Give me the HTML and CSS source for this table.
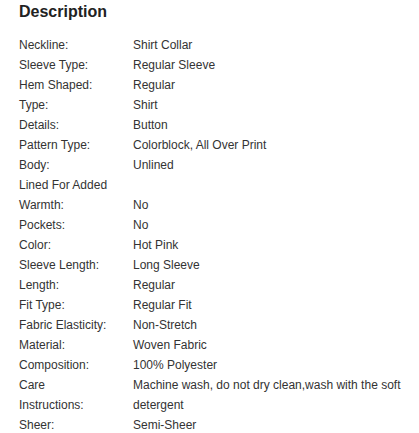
FILE: index.html
```html
<!DOCTYPE html>
<html>
<head>
<meta charset="utf-8">
<link rel="stylesheet" href="styles.css">
</head>
<body>
<div class="desc">
  <h2 class="title">Description</h2>
  <div class="specs">
    <div class="k">Neckline:</div><div class="v">Shirt Collar</div>
    <div class="k">Sleeve Type:</div><div class="v">Regular Sleeve</div>
    <div class="k">Hem Shaped:</div><div class="v">Regular</div>
    <div class="k">Type:</div><div class="v">Shirt</div>
    <div class="k">Details:</div><div class="v">Button</div>
    <div class="k">Pattern Type:</div><div class="v">Colorblock, All Over Print</div>
    <div class="k">Body:</div><div class="v">Unlined</div>
    <div class="k">Lined For Added Warmth:</div><div class="v">No</div>
    <div class="k">Pockets:</div><div class="v">No</div>
    <div class="k">Color:</div><div class="v">Hot Pink</div>
    <div class="k">Sleeve Length:</div><div class="v">Long Sleeve</div>
    <div class="k">Length:</div><div class="v">Regular</div>
    <div class="k">Fit Type:</div><div class="v">Regular Fit</div>
    <div class="k">Fabric Elasticity:</div><div class="v">Non-Stretch</div>
    <div class="k">Material:</div><div class="v">Woven Fabric</div>
    <div class="k">Composition:</div><div class="v">100% Polyester</div>
    <div class="k">Care Instructions:</div><div class="v">Machine wash, do not dry clean,wash with the soft detergent</div>
    <div class="k">Sheer:</div><div class="v">Semi-Sheer</div>
  </div>
</div>
</body>
</html>
```
FILE: styles.css
```css
html, body {
  margin: 0;
  padding: 0;
  background: #fff;
}
.desc {
  padding: 3px 0 0 19px;
  font-family: "Liberation Sans", Arial, sans-serif;
  color: #333;
}
.title {
  margin: 0;
  font-size: 16px;
  line-height: 18px;
  font-weight: bold;
  color: #222;
}
.specs {
  margin-top: 14px;
  display: grid;
  grid-template-columns: 90px 280px;
  column-gap: 24px;
  align-items: end;
  font-size: 12px;
  line-height: 20px;
}
```
